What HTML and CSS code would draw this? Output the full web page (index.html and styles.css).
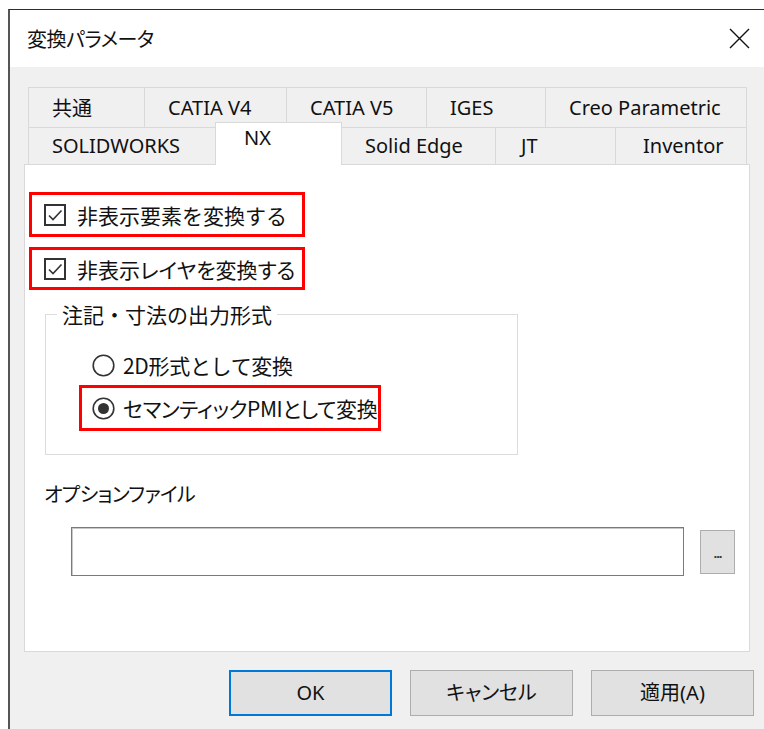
FILE: index.html
```html
<!DOCTYPE html>
<html lang="ja">
<head>
<meta charset="utf-8">
<title>変換パラメータ</title>
<link rel="stylesheet" href="styles.css">
</head>
<body>
<div class="window">
  <div class="titlebar">
    <span class="title">変換パラメータ</span>
    <svg class="close" width="21" height="21" viewBox="0 0 21 21" aria-hidden="true">
      <path d="M1 1 L20 20 M20 1 L1 20" stroke="#111" stroke-width="1.4" fill="none"/>
    </svg>
  </div>

  <div class="client">
    <div class="tabs">
      <div class="tab-row row-back">
        <div class="tab t-common">共通</div>
        <div class="tab t-v4">CATIA V4</div>
        <div class="tab t-v5">CATIA V5</div>
        <div class="tab t-iges">IGES</div>
        <div class="tab t-creo last">Creo Parametric</div>
      </div>
      <div class="tab-row row-front">
        <div class="tab t-sw">SOLIDWORKS</div>
        <div class="tab t-nx active">NX</div>
        <div class="tab t-se">Solid Edge</div>
        <div class="tab t-jt">JT</div>
        <div class="tab t-inv last">Inventor</div>
      </div>
    </div>

    <div class="panel">
      <div class="mark mark-check first">
        <svg class="checkbox" width="22" height="22" viewBox="0 0 22 22" aria-hidden="true">
          <rect x="1" y="1" width="20" height="20" fill="#fff" stroke="#333" stroke-width="2"/>
          <path d="M5 11.5 L9 15.5 L17.5 6.5" stroke="#333" stroke-width="1.6" fill="none"/>
        </svg>
        <span class="label">非表示要素を変換する</span>
      </div>
      <div class="mark mark-check second">
        <svg class="checkbox" width="22" height="22" viewBox="0 0 22 22" aria-hidden="true">
          <rect x="1" y="1" width="20" height="20" fill="#fff" stroke="#333" stroke-width="2"/>
          <path d="M5 11.5 L9 15.5 L17.5 6.5" stroke="#333" stroke-width="1.6" fill="none"/>
        </svg>
        <span class="label narrow">非表示レイヤを変換する</span>
      </div>

      <fieldset class="group">
        <legend>注記・寸法の出力形式</legend>
        <div class="radio-row">
          <svg class="radio" width="23" height="23" viewBox="0 0 23 23" aria-hidden="true">
            <circle cx="11.5" cy="11.5" r="10.3" fill="#fff" stroke="#333" stroke-width="1.6"/>
          </svg>
          <span class="label tight">2D形式として変換</span>
        </div>
        <div class="mark mark-radio">
          <svg class="radio" width="23" height="23" viewBox="0 0 23 23" aria-hidden="true">
            <circle cx="11.5" cy="11.5" r="10.3" fill="#fff" stroke="#333" stroke-width="1.6"/>
            <circle cx="11.5" cy="11.5" r="5.5" fill="#333"/>
          </svg>
          <span class="label narrow tighter">セマンティックPMIとして変換</span>
        </div>
      </fieldset>

      <div class="opt-label">オプションファイル</div>
      <div class="file-row">
        <div class="field"></div>
        <div class="browse">...</div>
      </div>
    </div>

    <div class="buttons">
      <div class="btn default">OK</div>
      <div class="btn kana">キャンセル</div>
      <div class="btn">適用(A)</div>
    </div>
  </div>
</div>
</body>
</html>
```

FILE: styles.css
```css
* {
  box-sizing: border-box;
}

html, body {
  margin: 0;
  padding: 0;
  background: #ffffff;
}

body {
  font-family: "Noto Sans", "Noto Sans CJK JP", sans-serif;
  color: #111;
  width: 764px;
  height: 729px;
  overflow: hidden;
}

/* dialog frame */
.window {
  margin: 9px 0 0 8px;
  border-top: 1px solid #2e2e2e;
  border-left: 2px solid #555;
  height: 720px;
  display: flex;
  flex-direction: column;
}

.titlebar {
  height: 57px;
  background: #fff;
  display: flex;
  align-items: center;
  justify-content: space-between;
  padding: 0 14px 0 17px;
}

.title {
  font-family: "Noto Sans CJK JP", sans-serif;
  font-size: 20px;
  line-height: 28px;
  font-feature-settings: "palt";
  letter-spacing: -0.5px;
  color: #111;
}

.close {
  display: block;
}

.client {
  flex: 1;
  background: #f0f0f0;
  padding: 20px 0 0 14px;
}

/* tab strip */
.tabs {
  padding-left: 4px;
}

.tab-row {
  display: flex;
}

.row-back {
  height: 40px;
}

.row-front {
  height: 37px;
}

.tab {
  background: #f0f0f0;
  border-top: 1px solid #d9d9d9;
  border-left: 1px solid #d9d9d9;
  padding-left: 23px;
  font-size: 20px;
  color: #111;
  white-space: nowrap;
}

.tab.last {
  border-right: 1px solid #d9d9d9;
}

.row-back .tab {
  height: 40px;
  line-height: 39px;
}

.row-front .tab {
  height: 37px;
  line-height: 35px;
}

.t-common { width: 116px; font-family: "Noto Sans CJK JP", sans-serif; }
.t-v4 { width: 142px; }
.t-v5 { width: 140px; }
.t-iges { width: 119px; }
.t-creo { width: 202px; }

.t-sw { width: 187px; }
.t-nx { width: 127px; padding-left: 28px; }
.t-se { width: 153px; }
.t-jt { width: 120px; padding-left: 25px; }
.t-inv { width: 132px; padding-left: 27px; }

.row-front .tab.active {
  position: relative;
  z-index: 1;
  background: #fff;
  border-right: 1px solid #d9d9d9;
  margin-top: -5px;
  height: 43px;
  line-height: 30px;
}

.row-front .tab.active + .tab {
  border-left: none;
}

/* page body */
.panel {
  width: 726px;
  height: 488px;
  background: #fff;
  border: 1px solid #d9d9d9;
  font-family: "Noto Sans CJK JP", sans-serif;
}

.label {
  font-size: 21px;
  line-height: 28px;
  white-space: nowrap;
}

.narrow {
  font-feature-settings: "palt";
}

.tight {
  letter-spacing: -0.3px;
}

.tighter {
  letter-spacing: -0.4px;
}

/* red call-out frames */
.mark {
  border: 3px solid #ff0000;
  display: flex;
  align-items: center;
}

.mark-check {
  margin-left: 4px;
  width: 276px;
  padding-left: 12px;
  gap: 11px;
}

.mark-check.first {
  margin-top: 27px;
  height: 45px;
}

.mark-check.second {
  margin-top: 10px;
  height: 43px;
}

.checkbox, .radio {
  display: block;
  flex: none;
}

/* option group */
.group {
  margin: 10px 0 0 20px;
  width: 473px;
  border: 1px solid #dcdcdc;
  padding: 0 0 23px 0;
}

.group legend {
  margin-left: 11px;
  padding: 0 5px;
  font-size: 21px;
  line-height: 28px;
}

.radio-row {
  margin: 23px 0 0 46px;
  height: 28px;
  display: flex;
  align-items: center;
  gap: 8px;
}

.mark-radio {
  margin: 6px 0 0 33px;
  width: 302px;
  height: 46px;
  padding-left: 10px;
  gap: 8px;
}

/* option file */
.opt-label {
  margin: 25px 0 0 19px;
  font-size: 20px;
  line-height: 28px;
  font-feature-settings: "palt";
  letter-spacing: -0.6px;
}

.file-row {
  margin: 19px 0 0 46px;
  display: flex;
  align-items: center;
  gap: 16px;
}

.field {
  width: 613px;
  height: 49px;
  background: #fff;
  border: 1px solid #7a7a7a;
  box-shadow: inset 1px 1px 0 #c8c8c8;
}

.browse {
  width: 35px;
  height: 44px;
  background: #e1e1e1;
  border: 1px solid #adadad;
  font-family: "Noto Sans", sans-serif;
  font-size: 13px;
  font-weight: bold;
  color: #333;
  text-align: center;
  line-height: 44px;
  letter-spacing: -1px;
}

/* dialog buttons */
.buttons {
  margin-top: 18px;
  display: flex;
  justify-content: flex-end;
  gap: 18px;
  padding-right: 10px;
}

.btn {
  width: 163px;
  height: 46px;
  background: #e1e1e1;
  border: 1px solid #adadad;
  font-family: "Noto Sans", "Noto Sans CJK JP", sans-serif;
  font-size: 20px;
  line-height: 43px;
  text-align: center;
  color: #111;
}

.btn.kana {
  font-feature-settings: "palt";
}

.btn.default {
  border: 2px solid #0078d7;
  line-height: 41px;
}
```
